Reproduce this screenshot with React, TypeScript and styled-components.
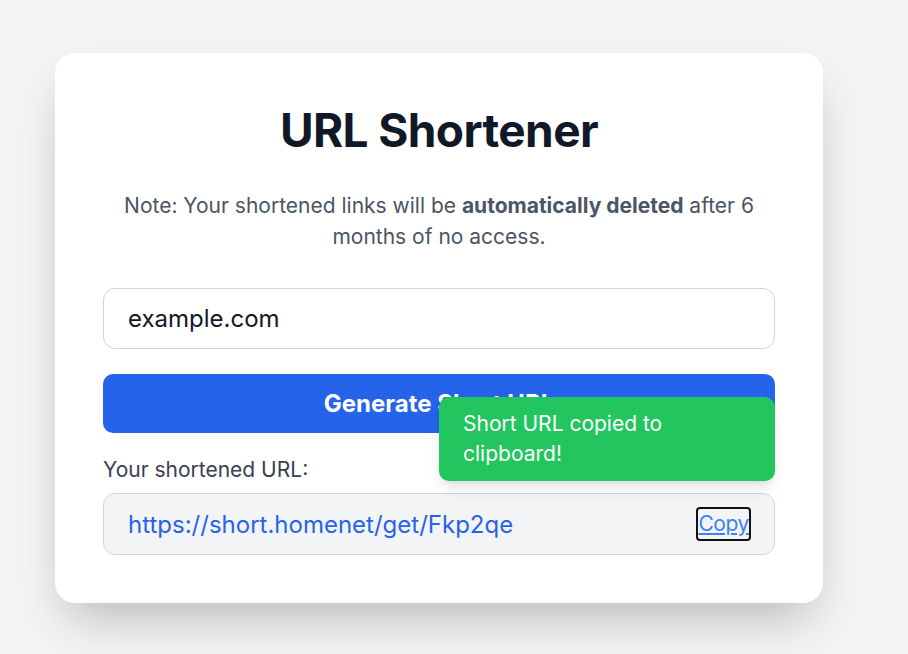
import React from "react";
import styled, { createGlobalStyle } from "styled-components";

const Global = createGlobalStyle`
  * { box-sizing: border-box; }
  html, body { margin: 0; padding: 0; background: #f3f4f6; }
  body { font-family: Inter, "Noto Sans", sans-serif; -webkit-font-smoothing: antialiased; }
`;

const Page = styled.div`
  min-height: 654px;
  padding: 53px 0 0 55px;
`;

const Card = styled.div`
  position: relative;
  width: 768px;
  background: #ffffff;
  border-radius: 20px;
  padding: 48px;
  box-shadow: 0 25px 50px -12px rgba(0, 0, 0, 0.25);
  display: flex;
  flex-direction: column;
`;

const Title = styled.h1`
  margin: 3px 0 34px;
  font-size: 46px;
  line-height: 52px;
  letter-spacing: -0.6px;
  font-weight: 700;
  color: #111827;
  text-align: center;
`;

const Note = styled.p`
  margin: 0 0 36px;
  font-size: 21px;
  line-height: 31px;
  color: #4b5563;
  text-align: center;
  padding: 0 8px;
  strong { font-weight: 700; }
`;

const Input = styled.input`
  width: 100%;
  height: 61px;
  padding: 0 24px;
  border: 1px solid #d1d5db;
  border-radius: 12px;
  font-family: inherit;
  font-size: 24px;
  color: #111827;
  background: #fff;
  outline: none;
  margin-bottom: 25px;
`;

const PrimaryButton = styled.button`
  width: 100%;
  height: 59px;
  border: none;
  border-radius: 10px;
  background: #2563eb;
  color: #fff;
  font-family: inherit;
  font-size: 24px;
  font-weight: 700;
  margin-bottom: 22px;
`;

const Label = styled.div`
  font-size: 21px;
  line-height: 30px;
  color: #374151;
  margin-bottom: 8px;
`;

const ResultBox = styled.div`
  height: 62px;
  display: flex;
  align-items: center;
  justify-content: space-between;
  padding: 0 23px 0 24px;
  background: #f3f4f6;
  border: 1px solid #d1d5db;
  border-radius: 12px;
`;

const ShortLink = styled.a`
  font-size: 24px;
  color: #2563eb;
  text-decoration: none;
`;

const CopyButton = styled.button`
  background: transparent;
  border: 2px solid #111;
  border-radius: 4px;
  padding: 2px 0;
  font-family: inherit;
  font-size: 21px;
  line-height: 26px;
  letter-spacing: -0.4px;
  color: #3b82f6;
  text-decoration: underline;
`;

const Toast = styled.div`
  position: absolute;
  left: 384px;
  top: 344px;
  width: 336px;
  padding: 12px 24px;
  background: #22c55e;
  color: #fff;
  border-radius: 10px;
  font-size: 21px;
  line-height: 30px;
  box-shadow: 0 10px 15px -3px rgba(0, 0, 0, 0.1), 0 4px 6px -4px rgba(0, 0, 0, 0.1);
`;

export default function App() {
  return (
    <>
      <Global />
      <Page>
        <Card>
          <Title>URL Shortener</Title>
          <Note>
            Note: Your shortened links will be <strong>automatically deleted</strong> after 6 months of no access.
          </Note>
          <Input defaultValue="example.com" />
          <PrimaryButton>Generate Short URL</PrimaryButton>
          <Label>Your shortened URL:</Label>
          <ResultBox>
            <ShortLink href="#">https://short.homenet/get/Fkp2qe</ShortLink>
            <CopyButton>Copy</CopyButton>
          </ResultBox>
          <Toast>Short URL copied to clipboard!</Toast>
        </Card>
      </Page>
    </>
  );
}
